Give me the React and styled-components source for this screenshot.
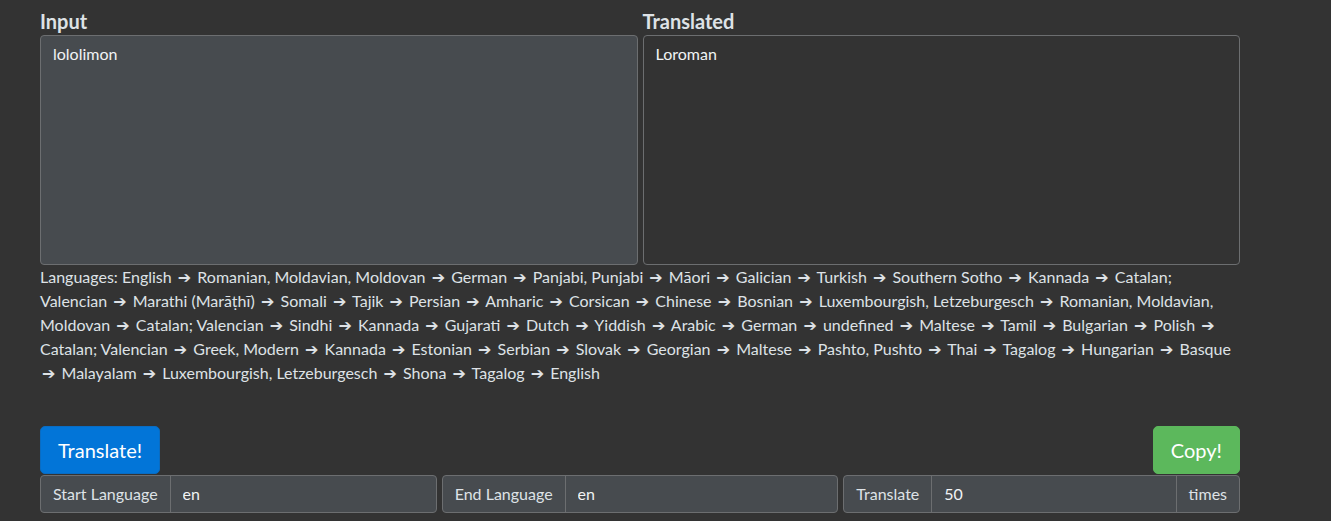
import React, { useState } from "react";
import styled, { createGlobalStyle } from "styled-components";

const GlobalStyle = createGlobalStyle`
  html, body {
    margin: 0;
    padding: 0;
    background: #333333;
  }
  body {
    font-family: Lato, "Open Sans", "DejaVu Sans", sans-serif;
    font-size: 16px;
    line-height: 1.5;
    color: #dee2e6;
  }
`;

const Page = styled.div`
  width: 1200px;
  padding: 11px 0 0 40px;
`;

const EditorRow = styled.div`
  display: flex;
  gap: 5px;
`;

const Column = styled.div`
  flex: 1;
  display: flex;
  flex-direction: column;
`;

const Label = styled.label`
  font-size: 20px;
  font-weight: 700;
  line-height: 20px;
  margin-bottom: 4px;
  color: #dee2e6;
`;

const TextBox = styled.textarea`
  box-sizing: border-box;
  height: 230px;
  margin: 0;
  padding: 6px 12px;
  font: inherit;
  color: #f1f3f5;
  background: ${(p) => (p.$readOnly ? "#333333" : "#474b4f")};
  border: 1px solid #6c6e70;
  border-radius: 4px;
  resize: none;
  outline: none;
`;

const Route = styled.p`
  margin: 0 0 41px;
  line-height: 24px;
`;

/* route separator, spaced a little wider than the body font's glyph */
const Arrow = styled.span`
  padding: 0 2px;
`;

const ActionRow = styled.div`
  display: flex;
  justify-content: space-between;
  align-items: flex-end;
`;

const Button = styled.button`
  box-sizing: border-box;
  height: 48px;
  padding: 8px 17px;
  font: inherit;
  font-size: 20px;
  line-height: 30px;
  color: #ffffff;
  background: ${(p) => p.$bg};
  border: 1px solid ${(p) => p.$border};
  border-radius: 5px;
  cursor: pointer;
`;

const SettingsRow = styled.div`
  display: flex;
  gap: 5px;
  margin-top: 1px;
`;

const Group = styled.div`
  flex: 1;
  display: flex;
  height: 38px;
  box-sizing: border-box;
  border: 1px solid #6c6e70;
  border-radius: 4px;
  overflow: hidden;
  background: #474b4f;
`;

const Addon = styled.span`
  display: flex;
  align-items: center;
  padding: 0 12px;
  color: #dee2e6;
  white-space: nowrap;
  border-left: ${(p) => (p.$first ? "none" : "1px solid #6c6e70")};
  border-right: ${(p) => (p.$first ? "1px solid #6c6e70" : "none")};
`;

const Field = styled.input`
  flex: 1;
  min-width: 0;
  margin: 0;
  padding: 0 12px;
  font: inherit;
  color: #f1f3f5;
  background: transparent;
  border: none;
  outline: none;
`;

const languages = [
  "English", "Romanian, Moldavian, Moldovan", "German", "Panjabi, Punjabi", "Māori",
  "Galician", "Turkish", "Southern Sotho", "Kannada", "Catalan; Valencian",
  "Marathi (Marāṭhī)", "Somali", "Tajik", "Persian", "Amharic", "Corsican", "Chinese",
  "Bosnian", "Luxembourgish, Letzeburgesch", "Romanian, Moldavian, Moldovan",
  "Catalan; Valencian", "Sindhi", "Kannada", "Gujarati", "Dutch", "Yiddish", "Arabic",
  "German", "undefined", "Maltese", "Tamil", "Bulgarian", "Polish", "Catalan; Valencian",
  "Greek, Modern", "Kannada", "Estonian", "Serbian", "Slovak", "Georgian", "Maltese",
  "Pashto, Pushto", "Thai", "Tagalog", "Hungarian", "Basque", "Malayalam",
  "Luxembourgish, Letzeburgesch", "Shona", "Tagalog", "English",
];

export default function App() {
  const [input, setInput] = useState("lololimon");
  const [start, setStart] = useState("en");
  const [end, setEnd] = useState("en");
  const [times, setTimes] = useState("50");

  return (
    <>
      <GlobalStyle />
      <Page>
        <EditorRow>
          <Column>
            <Label htmlFor="source">Input</Label>
            <TextBox id="source" value={input} onChange={(e) => setInput(e.target.value)} />
          </Column>
          <Column>
            <Label htmlFor="result">Translated</Label>
            <TextBox id="result" $readOnly readOnly value="Loroman" />
          </Column>
        </EditorRow>
        <Route>
          Languages:{" "}
          {languages.map((lang, i) => (
            <React.Fragment key={i}>
              {i > 0 && (
                <>
                  {" "}
                  <Arrow>➔</Arrow>{" "}
                </>
              )}
              {lang}
            </React.Fragment>
          ))}
        </Route>
        <ActionRow>
          <Button $bg="#0275d8" $border="#0a6cc2">Translate!</Button>
          <Button $bg="#5cb85c" $border="#5cb85c">Copy!</Button>
        </ActionRow>
        <SettingsRow>
          <Group>
            <Addon $first>Start Language</Addon>
            <Field value={start} onChange={(e) => setStart(e.target.value)} />
          </Group>
          <Group>
            <Addon $first>End Language</Addon>
            <Field value={end} onChange={(e) => setEnd(e.target.value)} />
          </Group>
          <Group>
            <Addon $first>Translate</Addon>
            <Field value={times} onChange={(e) => setTimes(e.target.value)} />
            <Addon>times</Addon>
          </Group>
        </SettingsRow>
      </Page>
    </>
  );
}
